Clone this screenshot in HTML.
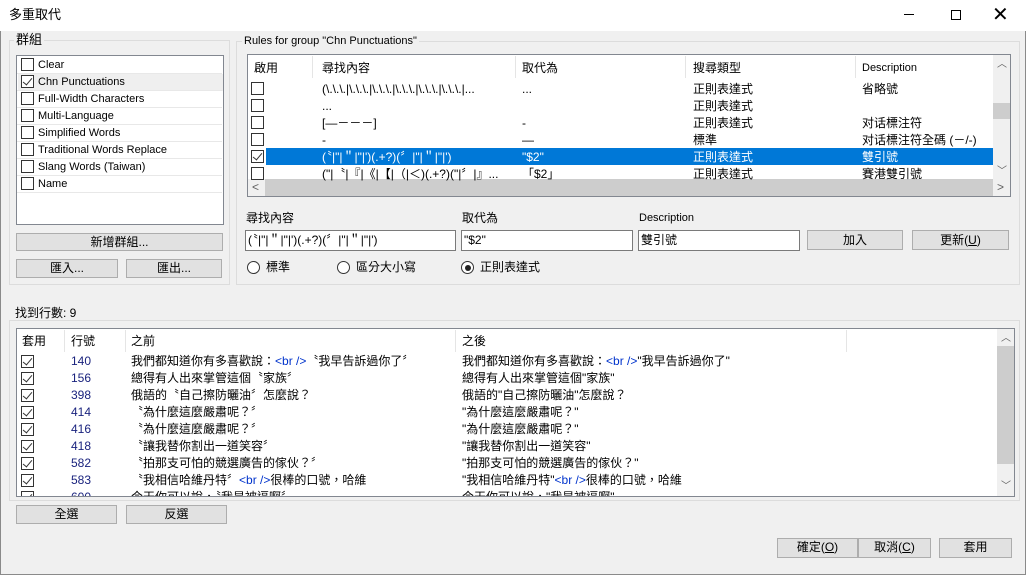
<!DOCTYPE html>
<html><head><meta charset="utf-8"><style>
*{box-sizing:border-box;margin:0;padding:0}
body{width:1026px;height:575px;overflow:hidden;background:#f0f0f0;font-family:"Liberation Sans","Noto Sans CJK TC",sans-serif;font-size:12px;color:#000;position:relative}
.a,.hd{position:absolute;white-space:nowrap;line-height:16px}
.win{position:absolute;left:0;top:0;width:1026px;height:575px;border:1px solid #8a8a8a}
.title{position:absolute;left:0;top:0;width:1026px;height:31px;background:#fff}
.fs{position:absolute;border:1px solid #dcdcdc}
.lg{position:absolute;background:#f0f0f0;padding:0 2px;line-height:14px}
.box{position:absolute;background:#fff;border:1px solid #828790;overflow:hidden}
.btn{position:absolute;background:#e1e1e1;border:1px solid #adadad;text-align:center;line-height:17px}
.cb{position:absolute;width:13px;height:13px;border:1px solid #333;background:#fff}
.cb.c::after{content:"";position:absolute;left:3px;top:0px;width:4px;height:8px;border:solid #333;border-width:0 1.3px 1.3px 0;transform:rotate(40deg)}
.inp{position:absolute;background:#fff;border:1px solid #7a7a7a;height:21px;line-height:19px;padding-left:2px}
.sep{position:absolute;width:1px;background:#e5e5e5}
.num{color:#1a237e}
.br{color:#0033cc}
.rad{position:absolute;width:13px;height:13px;border:1px solid #333;border-radius:50%;background:#fff}
.rad.c::after{content:"";position:absolute;left:2.5px;top:2.5px;width:6px;height:6px;border-radius:50%;background:#222}
</style></head><body>
<div class="win"></div>
<div class="title"></div>
<div class="a" style="left:9px;top:7px;font-size:13px">多重取代</div>
<div class="a" style="left:904px;top:14px;width:10px;height:1px;background:#000"></div>
<div class="a" style="left:951px;top:10px;width:10px;height:10px;border:1px solid #000"></div>
<div class="a" style="left:992px;top:4px;font-size:20px;font-weight:300;line-height:22px">✕</div>

<div class="fs" style="left:9px;top:40px;width:221px;height:245px"></div>
<div class="lg" style="left:14px;top:33px;font-size:13px">群組</div>
<div class="box" style="left:16px;top:55px;width:208px;height:170px">
<div class="a" style="left:1px;top:18px;width:205px;height:17px;background:#efefef"></div>
</div>
<div id="gl"></div>
<div class="btn" style="left:16px;top:233px;width:207px;height:18px">新增群組...</div>
<div class="btn" style="left:16px;top:259px;width:102px;height:19px">匯入...</div>
<div class="btn" style="left:126px;top:259px;width:96px;height:19px">匯出...</div>

<div class="fs" style="left:236px;top:41px;width:784px;height:244px"></div>
<div class="lg" style="left:242px;top:34px;font-size:11px">Rules for group "Chn Punctuations"</div>
<div class="box" style="left:247px;top:54px;width:764px;height:143px">
<div class="a" style="left:18px;top:93px;width:727px;height:17px;background:#0078d7"></div>
<div class="a" style="left:745px;top:0;width:17px;height:124px;background:#f0f0f0"></div>
<div class="a" style="left:745px;top:48px;width:17px;height:16px;background:#cdcdcd"></div>
<div class="a" style="left:0;top:124px;width:762px;height:17px;background:#f0f0f0"></div>
<div class="a" style="left:17px;top:124px;width:728px;height:17px;background:#cdcdcd"></div>
<div class="a" style="left:4px;top:124px;color:#606060">&lt;</div>
<div class="a" style="left:749px;top:124px;color:#606060">&gt;</div>
<div class="a" style="left:749px;top:2px;color:#606060;font-size:10px">︿</div>
<div class="a" style="left:749px;top:109px;color:#606060;font-size:10px">﹀</div>
</div>
<div class="sep" style="left:312px;top:56px;height:22px"></div>
<div class="sep" style="left:515px;top:56px;height:22px"></div>
<div class="sep" style="left:685px;top:56px;height:22px"></div>
<div class="sep" style="left:855px;top:56px;height:22px"></div>
<div class="hd" style="left:254px;top:60px">啟用</div>
<div class="hd" style="left:322px;top:60px">尋找內容</div>
<div class="hd" style="left:522px;top:60px">取代為</div>
<div class="hd" style="left:693px;top:60px">搜尋類型</div>
<div class="hd" style="left:862px;top:60px;font-size:11px">Description</div>
<div id="rl"></div>

<div class="a" style="left:246px;top:210px">尋找內容</div>
<div class="a" style="left:462px;top:210px">取代為</div>
<div class="a" style="left:639px;top:210px;font-size:11px">Description</div>
<div class="inp" style="left:245px;top:230px;width:211px">(〝|"|＂|"|')(.+?)(〞|"|＂|"|')</div>
<div class="inp" style="left:461px;top:230px;width:172px">"$2"</div>
<div class="inp" style="left:638px;top:230px;width:162px">雙引號</div>
<div class="btn" style="left:807px;top:230px;width:96px;height:20px;line-height:18px">加入</div>
<div class="btn" style="left:912px;top:230px;width:97px;height:20px;line-height:18px">更新(<u>U</u>)</div>
<div class="rad" style="left:247px;top:261px"></div><div class="a" style="left:266px;top:259px">標準</div>
<div class="rad" style="left:337px;top:261px"></div><div class="a" style="left:356px;top:259px">區分大小寫</div>
<div class="rad c" style="left:461px;top:261px"></div><div class="a" style="left:480px;top:259px">正則表達式</div>

<div class="fs" style="left:9px;top:320px;width:1011px;height:181px"></div>
<div class="lg" style="left:13px;top:306px">找到行數: 9</div>
<div class="box" style="left:16px;top:328px;width:999px;height:169px">
<div class="a" style="left:980px;top:0;width:17px;height:167px;background:#f0f0f0"></div>
<div class="a" style="left:980px;top:17px;width:17px;height:118px;background:#cdcdcd"></div>
<div class="a" style="left:984px;top:2px;color:#606060;font-size:10px">︿</div>
<div class="a" style="left:984px;top:150px;color:#606060;font-size:10px">﹀</div>
</div>
<div class="sep" style="left:64px;top:330px;height:22px"></div>
<div class="sep" style="left:125px;top:330px;height:22px"></div>
<div class="sep" style="left:455px;top:330px;height:22px"></div>
<div class="sep" style="left:846px;top:330px;height:22px"></div>
<div class="hd" style="left:22px;top:333px">套用</div>
<div class="hd" style="left:71px;top:333px">行號</div>
<div class="hd" style="left:131px;top:333px">之前</div>
<div class="hd" style="left:462px;top:333px">之後</div>
<div id="fl"></div>

<div class="btn" style="left:16px;top:505px;width:101px;height:19px">全選</div>
<div class="btn" style="left:126px;top:505px;width:101px;height:19px">反選</div>
<div class="btn" style="left:777px;top:538px;width:81px;height:20px">確定(<u>O</u>)</div>
<div class="btn" style="left:858px;top:538px;width:73px;height:20px">取消(<u>C</u>)</div>
<div class="btn" style="left:939px;top:538px;width:73px;height:20px">套用</div>

<script>
var g=["Clear","Chn Punctuations","Full-Width Characters","Multi-Language","Simplified Words","Traditional Words Replace","Slang Words (Taiwan)","Name"],h="";
g.forEach(function(t,i){var y=58+i*17;h+='<div class="cb'+(i==1?' c':'')+'" style="left:21px;top:'+y+'px"></div><div class="a" style="left:38px;top:'+(y-1)+'px;font-size:11px">'+t+'</div>';
h+='<div class="a" style="left:17px;top:'+(y+15)+'px;width:205px;height:1px;background:#e8e8e8"></div>';});
document.getElementById('gl').innerHTML=h;
var r=[["(\\.\\.\\.|\\.\\.\\.|\\.\\.\\.|\\.\\.\\.|\\.\\.\\.|\\.\\.\\.|...","...","正則表達式","省略號"],["...","","正則表達式",""],["[—－－－]","-","正則表達式","对话標注符"],["-","—","標準","对话標注符全碼 (－/-)"],["(〝|\"|＂|\"|')(.+?)(〞|\"|＂|\"|')","\"$2\"","正則表達式","雙引號"],["(\"|〝|『|《|【|（|＜)(.+?)(\"|〞|』...","「$2」","正則表達式","賽港雙引號"]];h="";
r.forEach(function(x,i){var y=81+i*17,s=i==4,c=s?'color:#fff;':'';
h+='<div class="cb'+(s?' c':'')+'" style="left:251px;top:'+(y+1)+'px"></div>';
h+='<div class="a" style="'+c+'left:322px;top:'+y+'px;width:190px;overflow:hidden">'+x[0].replace(/</g,'&lt;')+'</div>';
h+='<div class="a" style="'+c+'left:522px;top:'+y+'px">'+x[1]+'</div>';
h+='<div class="a" style="'+c+'left:693px;top:'+y+'px">'+x[2]+'</div>';
h+='<div class="a" style="'+c+'left:862px;top:'+y+'px">'+x[3]+'</div>';});
document.getElementById('rl').innerHTML=h;
var B='<span class="br">&lt;br /&gt;</span>';
var f=[["140","我們都知道你有多喜歡說："+B+"〝我早告訴過你了〞","我們都知道你有多喜歡說："+B+"\"我早告訴過你了\""],["156","總得有人出來掌管這個〝家族〞","總得有人出來掌管這個\"家族\""],["398","俄語的〝自己擦防曬油〞怎麼說？","俄語的\"自己擦防曬油\"怎麼說？"],["414","〝為什麼這麼嚴肅呢？〞","\"為什麼這麼嚴肅呢？\""],["416","〝為什麼這麼嚴肅呢？〞","\"為什麼這麼嚴肅呢？\""],["418","〝讓我替你割出一道笑容〞","\"讓我替你割出一道笑容\""],["582","〝拍那支可怕的競選廣告的傢伙？〞","\"拍那支可怕的競選廣告的傢伙？\""],["583","〝我相信哈維丹特〞"+B+"很棒的口號，哈維","\"我相信哈維丹特\""+B+"很棒的口號，哈維"],["600","今天你可以說，〝我是被逼啊〞","今天你可以說，\"我是被逼啊\""]];h="";
f.forEach(function(x,i){var y=353+i*17;if(y>490)return;
h+='<div style="position:absolute;left:17px;top:'+y+'px;width:980px;height:'+Math.min(17,496-y)+'px;overflow:hidden">';
h+='<div class="cb c" style="left:4px;top:2px"></div>';
h+='<div class="a num" style="left:54px;top:0px">'+x[0]+'</div>';
h+='<div class="a" style="left:114px;top:0px">'+x[1]+'</div>';
h+='<div class="a" style="left:445px;top:0px">'+x[2]+'</div></div>';});
document.getElementById('fl').innerHTML=h;
</script>
</body></html>
